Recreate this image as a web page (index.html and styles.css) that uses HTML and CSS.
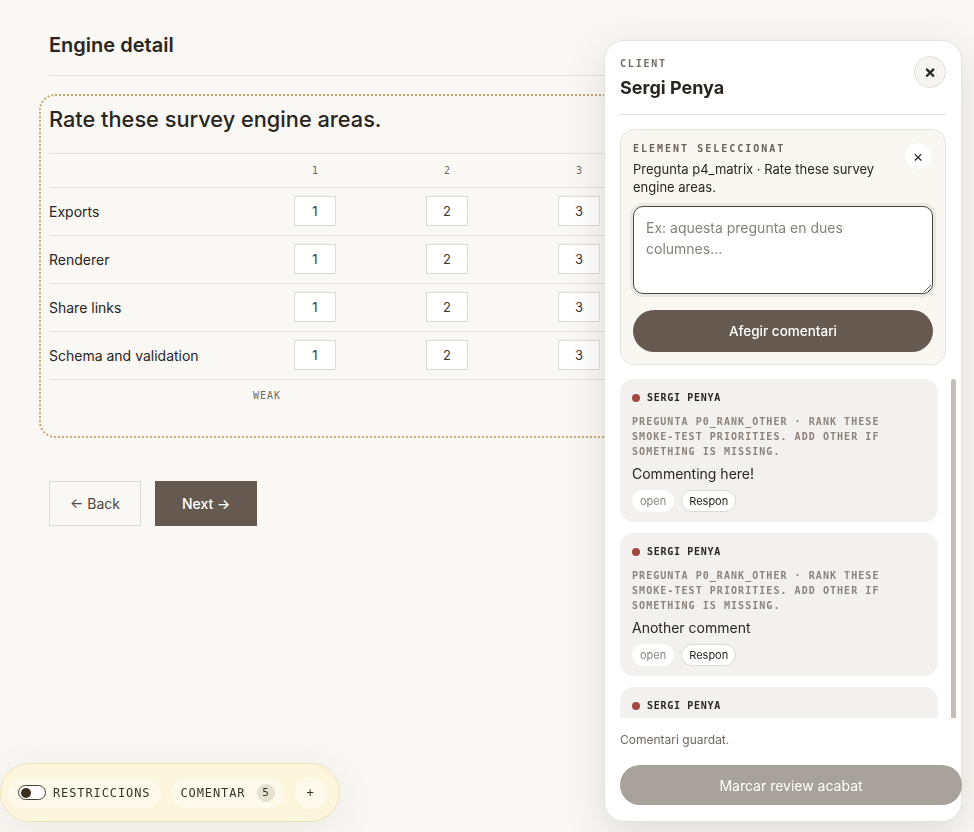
FILE: index.html
```html
<!DOCTYPE html>
<html lang="ca">
<head>
    <meta charset="UTF-8">
    <meta name="viewport" content="width=device-width, initial-scale=1.0">
    <title>Engine detail</title>
    <link rel="stylesheet" href="styles.css">
</head>
<body>
    <main class="page">
        <h2 class="page-title">Engine detail</h2>

        <section class="question">
            <h3 class="question-title">Rate these survey engine areas.</h3>
            <table class="matrix">
                <thead>
                    <tr>
                        <th class="row-label"></th>
                        <th>1</th>
                        <th>2</th>
                        <th>3</th>
                        <th>4</th>
                        <th>5</th>
                    </tr>
                </thead>
                <tbody>
                    <tr>
                        <td class="row-label">Exports</td>
                        <td><span class="cell">1</span></td>
                        <td><span class="cell">2</span></td>
                        <td><span class="cell">3</span></td>
                        <td><span class="cell">4</span></td>
                        <td><span class="cell">5</span></td>
                    </tr>
                    <tr>
                        <td class="row-label">Renderer</td>
                        <td><span class="cell">1</span></td>
                        <td><span class="cell">2</span></td>
                        <td><span class="cell">3</span></td>
                        <td><span class="cell">4</span></td>
                        <td><span class="cell">5</span></td>
                    </tr>
                    <tr>
                        <td class="row-label">Share links</td>
                        <td><span class="cell">1</span></td>
                        <td><span class="cell">2</span></td>
                        <td><span class="cell">3</span></td>
                        <td><span class="cell">4</span></td>
                        <td><span class="cell">5</span></td>
                    </tr>
                    <tr>
                        <td class="row-label">Schema and validation</td>
                        <td><span class="cell">1</span></td>
                        <td><span class="cell">2</span></td>
                        <td><span class="cell">3</span></td>
                        <td><span class="cell">4</span></td>
                        <td><span class="cell">5</span></td>
                    </tr>
                </tbody>
                <tfoot>
                    <tr>
                        <td class="row-label"></td>
                        <td class="scale">Weak</td>
                        <td></td>
                        <td></td>
                        <td></td>
                        <td class="scale scale-end">Strong</td>
                    </tr>
                </tfoot>
            </table>
        </section>

        <div class="nav-buttons">
            <button class="btn btn-back">&larr; Back</button>
            <button class="btn btn-next">Next &rarr;</button>
        </div>
    </main>

    <aside class="review-panel">
        <header class="panel-head">
            <div>
                <div class="eyebrow">Client</div>
                <div class="client-name">Sergi Penya</div>
            </div>
            <button class="close-btn">&times;</button>
        </header>

        <div class="selected">
            <div class="selected-top">
                <div>
                    <div class="eyebrow selected-label">Element seleccionat</div>
                    <p class="selected-text">Pregunta p4_matrix · Rate these survey engine areas.</p>
                </div>
                <button class="selected-close">&times;</button>
            </div>
            <textarea class="comment-input" placeholder="Ex: aquesta pregunta en dues columnes..."></textarea>
            <button class="add-btn">Afegir comentari</button>
        </div>

        <div class="comments-wrap">
            <div class="comments">
                <article class="comment">
                    <div class="comment-author"><span class="dot"></span>Sergi Penya</div>
                    <div class="comment-meta">Pregunta p0_rank_other · Rank these smoke-test priorities. Add Other if something is missing.</div>
                    <p class="comment-body">Commenting here!</p>
                    <div class="comment-actions">
                        <span class="pill pill-status">open</span>
                        <button class="pill pill-reply">Respon</button>
                    </div>
                </article>
                <article class="comment">
                    <div class="comment-author"><span class="dot"></span>Sergi Penya</div>
                    <div class="comment-meta">Pregunta p0_rank_other · Rank these smoke-test priorities. Add Other if something is missing.</div>
                    <p class="comment-body">Another comment</p>
                    <div class="comment-actions">
                        <span class="pill pill-status">open</span>
                        <button class="pill pill-reply">Respon</button>
                    </div>
                </article>
                <article class="comment">
                    <div class="comment-author"><span class="dot"></span>Sergi Penya</div>
                    <div class="comment-meta">Pregunta p4_matrix · Rate these survey engine areas.</div>
                    <p class="comment-body">Third one</p>
                    <div class="comment-actions">
                        <span class="pill pill-status">open</span>
                        <button class="pill pill-reply">Respon</button>
                    </div>
                </article>
            </div>
            <div class="scroll-thumb"></div>
        </div>

        <footer class="panel-foot">
            <div class="status-msg">Comentari guardat.</div>
            <button class="finish-btn">Marcar review acabat</button>
        </footer>
    </aside>

    <div class="toolbar">
        <div class="chip">
            <span class="toggle"><span class="knob"></span></span>
            Restriccions
        </div>
        <div class="chip">
            Comentar
            <span class="badge">5</span>
        </div>
        <button class="chip chip-round">+</button>
    </div>
</body>
</html>
```

FILE: styles.css
```css
* {
    box-sizing: border-box;
}

body {
    margin: 0;
    background-color: #f9f8f4;
    color: #2a2521;
    font-family: 'Inter', 'Liberation Sans', sans-serif;
    height: 832px;
    overflow: hidden;
}

button {
    font-family: inherit;
    cursor: pointer;
}

.page {
    padding: 31px 0 0 49px;
    width: 920px;
}

.page-title {
    margin: 0;
    font-size: 20px;
    line-height: 28px;
    font-weight: 600;
    padding-bottom: 16px;
    border-bottom: 1px solid #e2dfda;
}

.question {
    margin: 18px 0 0 -10px;
    padding: 9px 10px 24px 8px;
    border: 2px dotted #c9a473;
    border-radius: 16px;
}

.question-title {
    margin: 0 0 20px;
    font-size: 21.75px;
    line-height: 28px;
    font-weight: 500;
}

.matrix {
    border-collapse: collapse;
    width: 860px;
    table-layout: fixed;
}

.matrix th,
.matrix td {
    border-top: 1px solid #e4e1dc;
    text-align: center;
    padding: 0;
}

.matrix th {
    height: 34px;
    font-family: 'DejaVu Sans Mono', monospace;
    font-size: 10px;
    font-weight: normal;
    color: #6f6761;
}

.matrix .row-label {
    width: 200px;
    text-align: left;
    font-size: 14px;
}

.matrix tbody td {
    height: 48px;
    padding-bottom: 1px;
}

.cell {
    display: inline-block;
    width: 42px;
    height: 30px;
    line-height: 28px;
    background-color: #fff;
    border: 1px solid #dedad4;
    font-size: 13px;
    color: #3a342f;
}

.matrix tfoot td {
    height: 32px;
    vertical-align: top;
    padding-top: 10px;
}

.matrix .scale {
    text-align: left;
    padding-left: 4px;
    font-family: 'DejaVu Sans Mono', monospace;
    font-size: 10px;
    letter-spacing: 1px;
    text-transform: uppercase;
    color: #6f6761;
}

.matrix .scale-end {
    text-align: right;
    padding-right: 4px;
}

.nav-buttons {
    display: flex;
    gap: 14px;
    margin-top: 43px;
}

.btn {
    height: 45px;
    font-size: 14px;
    border: 1px solid #dcd8d2;
    background: transparent;
    color: #4d453f;
    padding: 0 20px;
}

.btn-next {
    background-color: #665950;
    border-color: #665950;
    color: #fff;
    font-weight: 500;
    padding: 0 26px;
}

/* review panel */
.review-panel {
    position: fixed;
    top: 40px;
    right: 12px;
    width: 358px;
    height: 782px;
    background-color: #fff;
    border: 1px solid #e6e3df;
    border-radius: 20px;
    box-shadow: 0 12px 40px rgba(60, 50, 40, 0.14);
    padding: 16px 15px;
    display: flex;
    flex-direction: column;
}

.eyebrow {
    font-family: 'DejaVu Sans Mono', monospace;
    font-size: 10px;
    line-height: 14px;
    font-weight: bold;
    letter-spacing: 1.8px;
    text-transform: uppercase;
    color: #756c65;
}

.panel-head {
    display: flex;
    justify-content: space-between;
    align-items: flex-start;
    padding-bottom: 14px;
    border-bottom: 1px solid #e3e0db;
}

.client-name {
    margin-top: 5px;
    font-size: 18px;
    line-height: 24px;
    font-weight: 700;
}

.close-btn {
    width: 32px;
    height: 32px;
    margin-top: -1px;
    border-radius: 50%;
    border: 1px solid #e2ded9;
    background-color: #f7f5f2;
    font-size: 18px;
    font-weight: bold;
    line-height: 1;
    color: #2a2521;
    padding: 0;
}

.selected {
    margin-top: 14px;
    background-color: #f9f7f2;
    border: 1px solid #e7e3dc;
    border-radius: 14px;
    padding: 12px;
}

.selected-top {
    display: flex;
    justify-content: space-between;
    align-items: flex-start;
    gap: 12px;
}

.selected-label {
    color: #6b6159;
    letter-spacing: 2px;
}

.selected-close {
    flex-shrink: 0;
    width: 26px;
    height: 26px;
    margin-top: 1px;
    margin-right: 2px;
    border: none;
    border-radius: 50%;
    background-color: #fff;
    font-size: 16px;
    line-height: 1;
    color: #2a2521;
    padding: 0;
}

.selected-text {
    margin: 4px 0 0;
    font-size: 13px;
    line-height: 18px;
}

.comment-input {
    display: block;
    width: 100%;
    height: 88px;
    margin-top: 10px;
    border: 1.5px solid #4b443e;
    border-radius: 10px;
    box-shadow: 0 0 0 3px #ebe8e3;
    padding: 10px 12px;
    font-family: inherit;
    font-size: 14px;
    line-height: 21px;
    color: #2a2521;
    resize: vertical;
}

.comment-input::placeholder {
    color: #86807a;
}

.add-btn {
    display: block;
    width: 100%;
    height: 42px;
    margin-top: 16px;
    border: none;
    border-radius: 21px;
    background-color: #665950;
    color: #fff;
    font-size: 13.5px;
    font-weight: 500;
}

.comments-wrap {
    flex: 1;
    min-height: 0;
    display: flex;
    gap: 13px;
    margin-top: 14px;
    margin-right: -15px;
    padding-right: 5px;
}

.comments {
    flex: 1;
    min-width: 0;
    overflow: hidden;
    display: flex;
    flex-direction: column;
    gap: 11px;
}

.scroll-thumb {
    width: 5px;
    background-color: #c4bdb8;
    border-radius: 3px 3px 0 0;
}

.comment {
    flex-shrink: 0;
    background-color: #f3f1ef;
    border-radius: 14px;
    padding: 13px 12px 10px;
}

.comment-author {
    display: flex;
    align-items: center;
    gap: 7px;
    font-family: 'DejaVu Sans Mono', monospace;
    font-size: 10px;
    line-height: 12px;
    font-weight: bold;
    letter-spacing: 0.7px;
    text-transform: uppercase;
}

.dot {
    width: 8px;
    height: 8px;
    border-radius: 50%;
    background-color: #a4483e;
}

.comment-meta {
    margin-top: 10px;
    font-family: 'DejaVu Sans Mono', monospace;
    font-size: 10px;
    line-height: 15px;
    font-weight: bold;
    letter-spacing: 1.05px;
    text-transform: uppercase;
    color: #8c837c;
}

.comment-body {
    margin: 5px 0 0;
    font-size: 14px;
    line-height: 20px;
}

.comment-actions {
    display: flex;
    gap: 7px;
    margin-top: 6px;
}

.pill {
    height: 22px;
    line-height: 20px;
    padding: 0 7px;
    border-radius: 11px;
    background-color: #fff;
    border: 1px solid #fff;
    font-size: 11px;
    font-family: inherit;
}

.pill-status {
    color: #8a8580;
}

.pill-reply {
    border-color: #dedad4;
    color: #2a2521;
}

.panel-foot {
    margin-top: 14px;
}

.status-msg {
    font-size: 12px;
    line-height: 16px;
    color: #6f6761;
}

.finish-btn {
    display: block;
    width: calc(100% + 16px);
    height: 40px;
    margin-top: 17px;
    border: none;
    border-radius: 20px;
    background-color: #a8a29c;
    color: #fff;
    font-size: 14px;
}

/* bottom toolbar */
.toolbar {
    position: fixed;
    left: 0;
    bottom: 10px;
    height: 59px;
    display: flex;
    align-items: center;
    gap: 10px;
    padding: 0 12px 0 7px;
    background-color: #fdf6dd;
    border: 1px solid #eee2bb;
    border-radius: 30px;
    box-shadow: 0 10px 40px rgba(60, 50, 40, 0.08);
}

.chip {
    display: flex;
    align-items: center;
    gap: 7px;
    height: 30px;
    padding: 0 10px;
    border-radius: 15px;
    background-color: #fefaeb;
    border: none;
    font-family: 'DejaVu Sans Mono', monospace;
    font-size: 12px;
    letter-spacing: 0.9px;
    text-transform: uppercase;
    color: #3a3228;
}

.toggle {
    display: inline-flex;
    align-items: center;
    width: 28px;
    height: 15px;
    border: 1px solid #4a3f30;
    border-radius: 8px;
    padding: 0 2px;
    background-color: #fff;
}

.knob {
    width: 10px;
    height: 10px;
    border-radius: 50%;
    background-color: #3a2e1c;
}

.badge {
    display: inline-block;
    width: 18px;
    height: 18px;
    line-height: 18px;
    margin-left: 4px;
    text-align: center;
    border-radius: 50%;
    background-color: #e5e0cf;
    font-size: 11px;
    letter-spacing: 0;
}

.chip-round {
    width: 32px;
    height: 32px;
    border-radius: 50%;
    padding: 0;
    justify-content: center;
}
```
